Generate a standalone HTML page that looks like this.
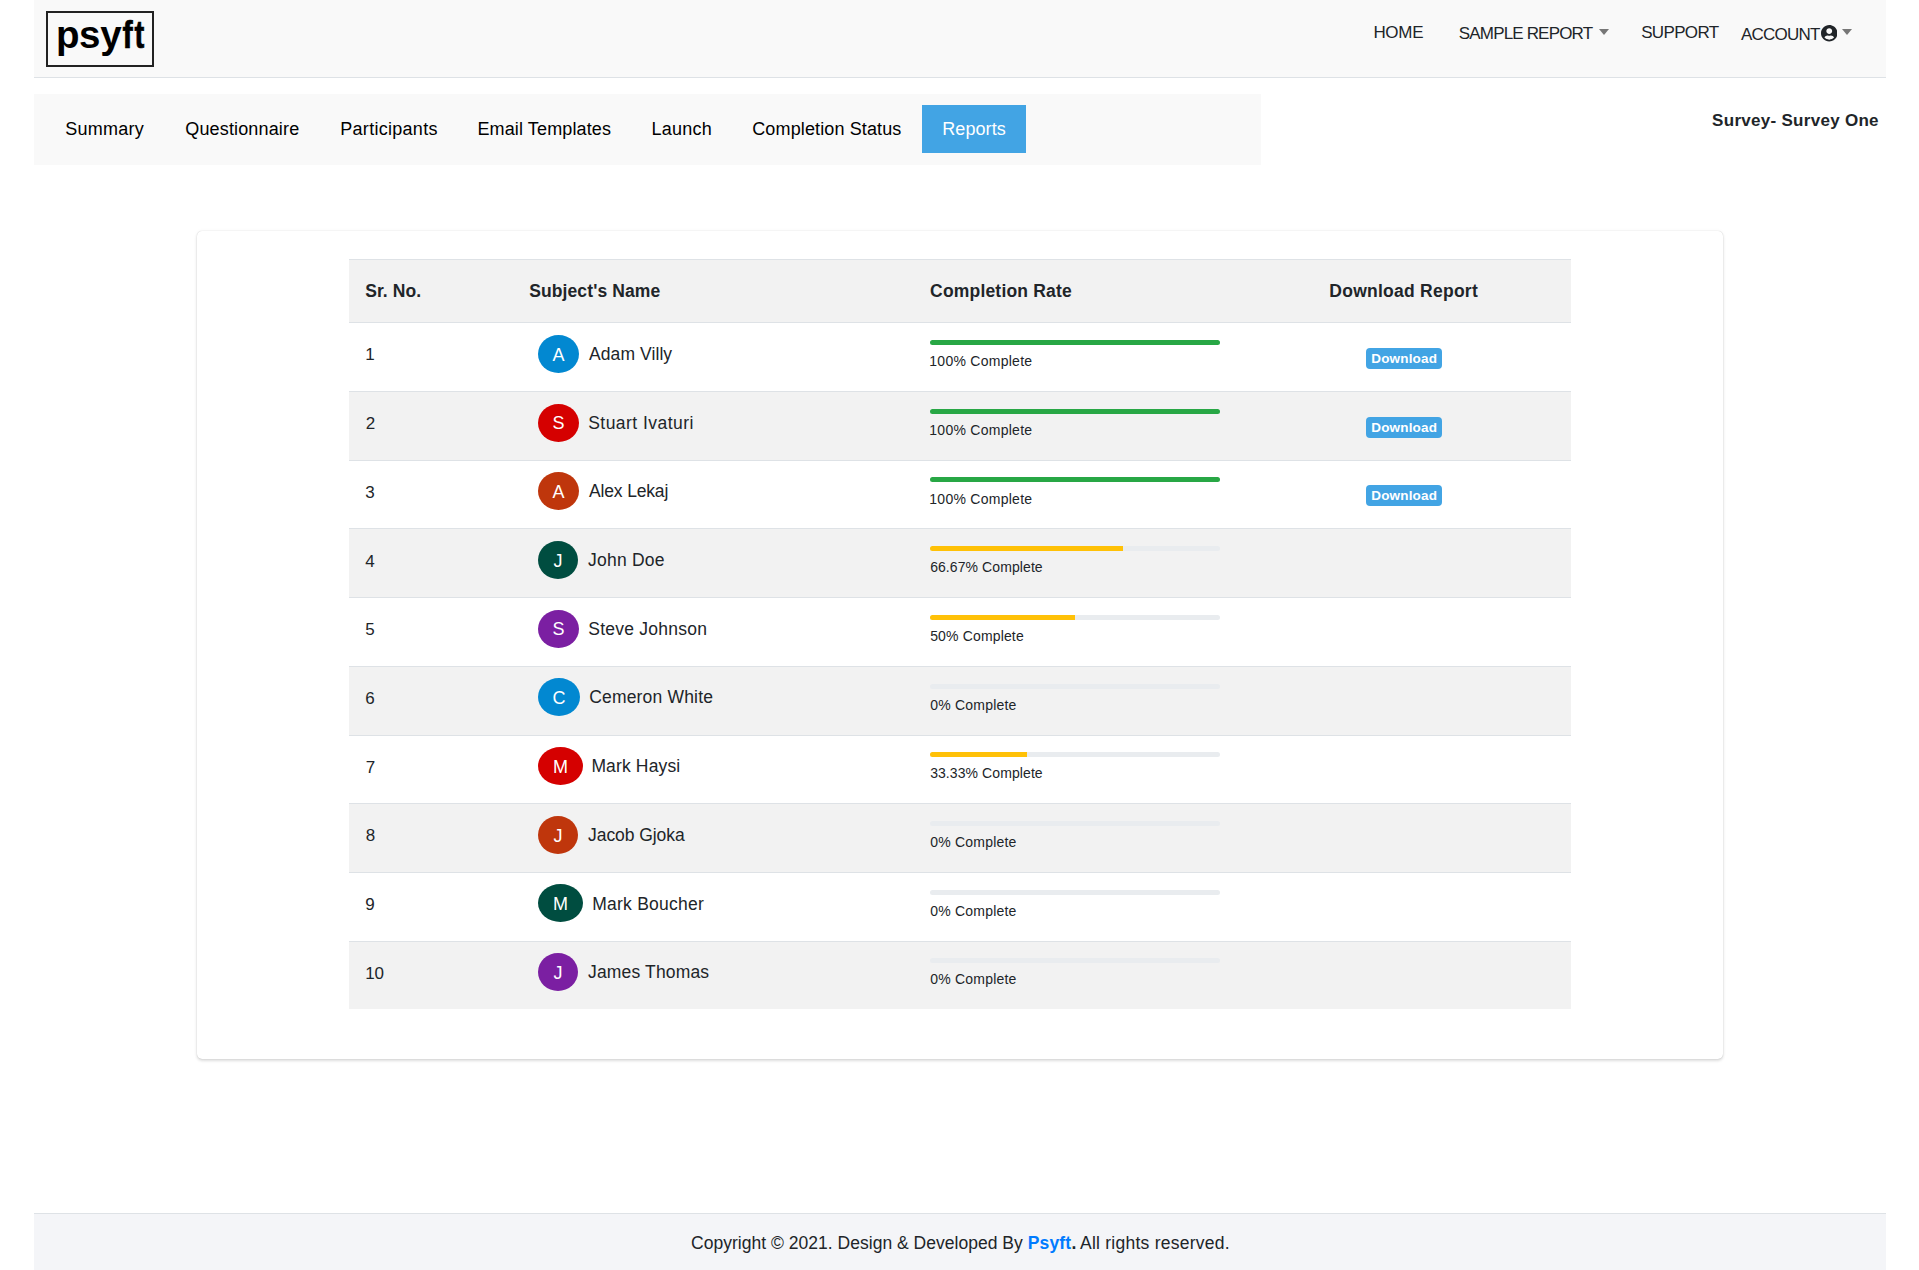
<!DOCTYPE html>
<html><head><meta charset="utf-8"><title>Psyft Reports</title>
<style>
html,body{margin:0;padding:0;background:#fff;}
body{width:1919px;height:1270px;position:relative;overflow:hidden;font-family:"Liberation Sans", sans-serif;}
.t,.bg{position:absolute;}
.t{white-space:nowrap;}
.av{border-radius:50%;color:#fff;font-size:17px;}

</style></head><body>
<div class="bg" style="left:34px;top:0;width:1852px;height:77px;background:#f9f9f9;border-bottom:1px solid #dee2e6"></div>
<div class="bg" style="left:46px;top:11px;width:104px;height:52px;border:2px solid #222;"></div>
<div id="lg0" class="t" style="left:55.90px;top:15.71px;font-size:38.5px;line-height:38.5px;color:#000;font-weight:700;letter-spacing:0.000px;">p</div>
<div id="lg1" class="t" style="left:79.10px;top:15.71px;font-size:38.5px;line-height:38.5px;color:#000;font-weight:700;letter-spacing:0.000px;">s</div>
<div id="lg2" class="t" style="left:100.33px;top:15.71px;font-size:38.5px;line-height:38.5px;color:#000;font-weight:700;letter-spacing:0.000px;">y</div>
<div id="lg3" class="t" style="left:121.45px;top:15.71px;font-size:38.5px;line-height:38.5px;color:#000;font-weight:700;letter-spacing:0.000px;transform:scaleX(0.795);transform-origin:6.80px 0;-webkit-text-stroke:0.7px #000;">f</div>
<div id="lg4" class="t" style="left:133.10px;top:15.71px;font-size:38.5px;line-height:38.5px;color:#000;font-weight:700;letter-spacing:0.000px;transform:scaleX(0.765);transform-origin:6.45px 0;-webkit-text-stroke:0.7px #000;">t</div>
<div id="home" class="t" style="left:1373.40px;top:23.61px;font-size:17px;line-height:17px;color:#212529;font-weight:400;letter-spacing:-0.300px;">HOME</div>
<div id="samp" class="t" style="left:1458.80px;top:25.41px;font-size:17px;line-height:17px;color:#212529;font-weight:400;letter-spacing:-0.831px;">SAMPLE REPORT</div>
<div class="bg" style="left:1598.5px;top:28.5px;width:0;height:0;border-left:5.5px solid transparent;border-right:5.5px solid transparent;border-top:6px solid #777"></div>
<div id="supp" class="t" style="left:1641.20px;top:23.61px;font-size:17px;line-height:17px;color:#212529;font-weight:400;letter-spacing:-0.663px;">SUPPORT</div>
<div id="acct" class="t" style="left:1741.05px;top:25.61px;font-size:17px;line-height:17px;color:#212529;font-weight:400;letter-spacing:-0.797px;">ACCOUNT</div>
<svg class="bg" style="left:1820.5px;top:25.3px" width="16.5" height="16.5" viewBox="0 0 496 496"><path fill="#212529" d="M248 8C111 8 0 119 0 256s111 248 248 248 248-111 248-248S385 8 248 8zm0 96c48.600 0 88 39.400 88 88s-39.400 88-88 88-88-39.400-88-88 39.400-88 88-88zm0 344c-58.700 0-111.300-26.600-146.500-68.200 18.800-35.400 55.600-59.800 98.500-59.800 2.400 0 4.800.4 7.100 1.100 13 4.200 26.600 6.900 40.900 6.900 14.300 0 28-2.700 40.900-6.900 2.300-.7 4.700-1.100 7.100-1.100 42.900 0 79.700 24.400 98.500 59.800C359.300 421.400 306.700 448 248 448z" transform="translate(0,-8)"/></svg>
<div class="bg" style="left:1841.5px;top:29px;width:0;height:0;border-left:5.5px solid transparent;border-right:5.5px solid transparent;border-top:6px solid #777"></div>
<div class="bg" style="left:34px;top:94px;width:1227px;height:71px;background:#f9f9f9"></div>
<div class="bg" style="left:922px;top:105px;width:104px;height:48px;background:#42a4e4"></div>
<div id="t1" class="t" style="left:65.34px;top:120.06px;font-size:18px;line-height:18px;color:#000;font-weight:400;letter-spacing:0.228px;">Summary</div>
<div id="t2" class="t" style="left:185.26px;top:120.06px;font-size:18px;line-height:18px;color:#000;font-weight:400;letter-spacing:0.155px;">Questionnaire</div>
<div id="t3" class="t" style="left:340.30px;top:120.06px;font-size:18px;line-height:18px;color:#000;font-weight:400;letter-spacing:0.280px;">Participants</div>
<div id="t4" class="t" style="left:477.40px;top:120.06px;font-size:18px;line-height:18px;color:#000;font-weight:400;letter-spacing:0.133px;">Email Templates</div>
<div id="t5" class="t" style="left:651.38px;top:120.06px;font-size:18px;line-height:18px;color:#000;font-weight:400;letter-spacing:0.272px;">Launch</div>
<div id="t6" class="t" style="left:752.26px;top:120.06px;font-size:18px;line-height:18px;color:#000;font-weight:400;letter-spacing:0.125px;">Completion Status</div>
<div id="t7" class="t" style="left:942.30px;top:120.06px;font-size:18px;line-height:18px;color:#fff;font-weight:400;letter-spacing:0.067px;">Reports</div>
<div id="survey" class="t" style="left:1712.10px;top:112.21px;font-size:17px;line-height:17px;color:#212529;font-weight:700;letter-spacing:0.288px;">Survey- Survey One</div>
<div class="bg" style="left:197px;top:231px;width:1526px;height:828px;background:#fff;border-radius:5px;box-shadow:0 0 1px rgba(0,0,0,.22),0 2px 3px rgba(0,0,0,.12),0 0 4px rgba(0,0,0,.04)"></div>
<div class="bg" style="left:349px;top:259px;width:1222px;height:62px;background:#f2f2f2;border-top:1px solid #dee2e6;border-bottom:1px solid #dee2e6"></div>
<div id="h1" class="t" style="left:365.20px;top:283.19px;font-size:17.5px;line-height:17.5px;color:#212529;font-weight:700;letter-spacing:0.067px;">Sr. No.</div>
<div id="h2" class="t" style="left:529.14px;top:283.19px;font-size:17.5px;line-height:17.5px;color:#212529;font-weight:700;letter-spacing:0.114px;">Subject's Name</div>
<div id="h3" class="t" style="left:930.12px;top:283.19px;font-size:17.5px;line-height:17.5px;color:#212529;font-weight:700;letter-spacing:0.181px;">Completion Rate</div>
<div id="h4" class="t" style="left:1329.30px;top:283.19px;font-size:17.5px;line-height:17.5px;color:#212529;font-weight:700;letter-spacing:0.257px;">Download Report</div>
<div id="n0" class="t" style="left:365.30px;top:346.41px;font-size:17px;line-height:17px;color:#212529;font-weight:400;letter-spacing:0.000px;">1</div>
<div class="av bg" style="left:538px;top:334.80px;width:41px;height:38px;background:#0288d1"><span style="position:absolute;left:0;right:0;top:0.9px;line-height:38px;font-size:18px;text-align:center">A</span></div>
<div id="nm0" class="t" style="left:589.04px;top:345.99px;font-size:17.5px;line-height:17.5px;color:#212529;font-weight:400;letter-spacing:0.081px;">Adam Villy</div>
<div class="bg" style="left:930px;top:340.00px;width:290px;height:5px;background:#e9ecef;border-radius:3px;overflow:hidden"><div style="width:100%;height:5px;background:#28a745"></div></div>
<div id="p0" class="t" style="left:929.34px;top:354.15px;font-size:14px;line-height:14px;color:#212529;font-weight:400;letter-spacing:0.260px;">100% Complete</div>
<div class="bg" style="left:1366px;top:348.00px;width:76px;height:21px;background:#42a4e4;border-radius:4px"></div>
<div id="d0" class="t" style="left:1371.24px;top:351.87px;font-size:13.5px;line-height:13.5px;color:#fff;font-weight:700;letter-spacing:0.166px;">Download</div>
<div class="bg" style="left:349px;top:391px;width:1222px;height:68px;background:#f2f2f2;border-top:1px solid #dee2e6"></div>
<div id="n1" class="t" style="left:365.70px;top:415.11px;font-size:17px;line-height:17px;color:#212529;font-weight:400;letter-spacing:0.000px;">2</div>
<div class="av bg" style="left:538px;top:403.50px;width:41px;height:38px;background:#d50000"><span style="position:absolute;left:0;right:0;top:0.9px;line-height:38px;font-size:18px;text-align:center">S</span></div>
<div id="nm1" class="t" style="left:588.24px;top:414.69px;font-size:17.5px;line-height:17.5px;color:#212529;font-weight:400;letter-spacing:0.456px;">Stuart Ivaturi</div>
<div class="bg" style="left:930px;top:408.70px;width:290px;height:5px;background:#e9ecef;border-radius:3px;overflow:hidden"><div style="width:100%;height:5px;background:#28a745"></div></div>
<div id="p1" class="t" style="left:929.34px;top:422.85px;font-size:14px;line-height:14px;color:#212529;font-weight:400;letter-spacing:0.260px;">100% Complete</div>
<div class="bg" style="left:1366px;top:416.70px;width:76px;height:21px;background:#42a4e4;border-radius:4px"></div>
<div id="d1" class="t" style="left:1371.24px;top:420.57px;font-size:13.5px;line-height:13.5px;color:#fff;font-weight:700;letter-spacing:0.166px;">Download</div>
<div class="bg" style="left:349px;top:460px;width:1222px;height:67px;background:#fff;border-top:1px solid #dee2e6"></div>
<div id="n2" class="t" style="left:365.30px;top:483.81px;font-size:17px;line-height:17px;color:#212529;font-weight:400;letter-spacing:0.000px;">3</div>
<div class="av bg" style="left:538px;top:472.20px;width:41px;height:38px;background:#bf360c"><span style="position:absolute;left:0;right:0;top:0.9px;line-height:38px;font-size:18px;text-align:center">A</span></div>
<div id="nm2" class="t" style="left:589.00px;top:483.39px;font-size:17.5px;line-height:17.5px;color:#212529;font-weight:400;letter-spacing:-0.156px;">Alex Lekaj</div>
<div class="bg" style="left:930px;top:477.40px;width:290px;height:5px;background:#e9ecef;border-radius:3px;overflow:hidden"><div style="width:100%;height:5px;background:#28a745"></div></div>
<div id="p2" class="t" style="left:929.34px;top:491.55px;font-size:14px;line-height:14px;color:#212529;font-weight:400;letter-spacing:0.260px;">100% Complete</div>
<div class="bg" style="left:1366px;top:485.40px;width:76px;height:21px;background:#42a4e4;border-radius:4px"></div>
<div id="d2" class="t" style="left:1371.24px;top:489.27px;font-size:13.5px;line-height:13.5px;color:#fff;font-weight:700;letter-spacing:0.166px;">Download</div>
<div class="bg" style="left:349px;top:528px;width:1222px;height:68px;background:#f2f2f2;border-top:1px solid #dee2e6"></div>
<div id="n3" class="t" style="left:365.30px;top:552.51px;font-size:17px;line-height:17px;color:#212529;font-weight:400;letter-spacing:0.000px;">4</div>
<div class="av bg" style="left:538px;top:540.90px;width:40px;height:38px;background:#004d40"><span style="position:absolute;left:0;right:0;top:0.9px;line-height:38px;font-size:18px;text-align:center">J</span></div>
<div id="nm3" class="t" style="left:588.04px;top:552.09px;font-size:17.5px;line-height:17.5px;color:#212529;font-weight:400;letter-spacing:0.220px;">John Doe</div>
<div class="bg" style="left:930px;top:546.10px;width:290px;height:5px;background:#e9ecef;border-radius:3px;overflow:hidden"><div style="width:66.67%;height:5px;background:#ffc107"></div></div>
<div id="p3" class="t" style="left:930.14px;top:560.25px;font-size:14px;line-height:14px;color:#212529;font-weight:400;letter-spacing:0.088px;">66.67% Complete</div>
<div class="bg" style="left:349px;top:597px;width:1222px;height:68px;background:#fff;border-top:1px solid #dee2e6"></div>
<div id="n4" class="t" style="left:365.30px;top:621.21px;font-size:17px;line-height:17px;color:#212529;font-weight:400;letter-spacing:0.000px;">5</div>
<div class="av bg" style="left:538px;top:609.60px;width:41px;height:38px;background:#7b1fa2"><span style="position:absolute;left:0;right:0;top:0.9px;line-height:38px;font-size:18px;text-align:center">S</span></div>
<div id="nm4" class="t" style="left:588.22px;top:620.79px;font-size:17.5px;line-height:17.5px;color:#212529;font-weight:400;letter-spacing:0.243px;">Steve Johnson</div>
<div class="bg" style="left:930px;top:614.80px;width:290px;height:5px;background:#e9ecef;border-radius:3px;overflow:hidden"><div style="width:50%;height:5px;background:#ffc107"></div></div>
<div id="p4" class="t" style="left:930.14px;top:628.95px;font-size:14px;line-height:14px;color:#212529;font-weight:400;letter-spacing:0.159px;">50% Complete</div>
<div class="bg" style="left:349px;top:666px;width:1222px;height:68px;background:#f2f2f2;border-top:1px solid #dee2e6"></div>
<div id="n5" class="t" style="left:365.30px;top:689.91px;font-size:17px;line-height:17px;color:#212529;font-weight:400;letter-spacing:0.000px;">6</div>
<div class="av bg" style="left:538px;top:678.30px;width:42px;height:38px;background:#0288d1"><span style="position:absolute;left:0;right:0;top:0.9px;line-height:38px;font-size:18px;text-align:center">C</span></div>
<div id="nm5" class="t" style="left:589.18px;top:689.49px;font-size:17.5px;line-height:17.5px;color:#212529;font-weight:400;letter-spacing:0.183px;">Cemeron White</div>
<div class="bg" style="left:930px;top:683.50px;width:290px;height:5px;background:#e9ecef;border-radius:3px;overflow:hidden"><div style="width:0%;height:5px;background:#ffc107"></div></div>
<div id="p5" class="t" style="left:930.14px;top:697.65px;font-size:14px;line-height:14px;color:#212529;font-weight:400;letter-spacing:0.220px;">0% Complete</div>
<div class="bg" style="left:349px;top:735px;width:1222px;height:67px;background:#fff;border-top:1px solid #dee2e6"></div>
<div id="n6" class="t" style="left:365.70px;top:758.61px;font-size:17px;line-height:17px;color:#212529;font-weight:400;letter-spacing:0.000px;">7</div>
<div class="av bg" style="left:538px;top:747.00px;width:45px;height:38px;background:#d50000"><span style="position:absolute;left:0;right:0;top:0.9px;line-height:38px;font-size:18px;text-align:center">M</span></div>
<div id="nm6" class="t" style="left:591.40px;top:758.19px;font-size:17.5px;line-height:17.5px;color:#212529;font-weight:400;letter-spacing:0.142px;">Mark Haysi</div>
<div class="bg" style="left:930px;top:752.20px;width:290px;height:5px;background:#e9ecef;border-radius:3px;overflow:hidden"><div style="width:33.33%;height:5px;background:#ffc107"></div></div>
<div id="p6" class="t" style="left:930.14px;top:766.35px;font-size:14px;line-height:14px;color:#212529;font-weight:400;letter-spacing:0.088px;">33.33% Complete</div>
<div class="bg" style="left:349px;top:803px;width:1222px;height:68px;background:#f2f2f2;border-top:1px solid #dee2e6"></div>
<div id="n7" class="t" style="left:365.70px;top:827.31px;font-size:17px;line-height:17px;color:#212529;font-weight:400;letter-spacing:0.000px;">8</div>
<div class="av bg" style="left:538px;top:815.70px;width:40px;height:38px;background:#bf360c"><span style="position:absolute;left:0;right:0;top:0.9px;line-height:38px;font-size:18px;text-align:center">J</span></div>
<div id="nm7" class="t" style="left:588.10px;top:826.89px;font-size:17.5px;line-height:17.5px;color:#212529;font-weight:400;letter-spacing:-0.072px;">Jacob Gjoka</div>
<div class="bg" style="left:930px;top:820.90px;width:290px;height:5px;background:#e9ecef;border-radius:3px;overflow:hidden"><div style="width:0%;height:5px;background:#ffc107"></div></div>
<div id="p7" class="t" style="left:930.14px;top:835.05px;font-size:14px;line-height:14px;color:#212529;font-weight:400;letter-spacing:0.220px;">0% Complete</div>
<div class="bg" style="left:349px;top:872px;width:1222px;height:68px;background:#fff;border-top:1px solid #dee2e6"></div>
<div id="n8" class="t" style="left:365.30px;top:896.01px;font-size:17px;line-height:17px;color:#212529;font-weight:400;letter-spacing:0.000px;">9</div>
<div class="av bg" style="left:538px;top:884.40px;width:45px;height:38px;background:#004d40"><span style="position:absolute;left:0;right:0;top:0.9px;line-height:38px;font-size:18px;text-align:center">M</span></div>
<div id="nm8" class="t" style="left:592.24px;top:895.59px;font-size:17.5px;line-height:17.5px;color:#212529;font-weight:400;letter-spacing:0.237px;">Mark Boucher</div>
<div class="bg" style="left:930px;top:889.60px;width:290px;height:5px;background:#e9ecef;border-radius:3px;overflow:hidden"><div style="width:0%;height:5px;background:#ffc107"></div></div>
<div id="p8" class="t" style="left:930.14px;top:903.75px;font-size:14px;line-height:14px;color:#212529;font-weight:400;letter-spacing:0.220px;">0% Complete</div>
<div class="bg" style="left:349px;top:941px;width:1222px;height:67px;background:#f2f2f2;border-top:1px solid #dee2e6"></div>
<div id="n9" class="t" style="left:365.30px;top:964.71px;font-size:17px;line-height:17px;color:#212529;font-weight:400;letter-spacing:-0.240px;">10</div>
<div class="av bg" style="left:538px;top:953.10px;width:40px;height:38px;background:#7b1fa2"><span style="position:absolute;left:0;right:0;top:0.9px;line-height:38px;font-size:18px;text-align:center">J</span></div>
<div id="nm9" class="t" style="left:588.06px;top:964.29px;font-size:17.5px;line-height:17.5px;color:#212529;font-weight:400;letter-spacing:0.157px;">James Thomas</div>
<div class="bg" style="left:930px;top:958.30px;width:290px;height:5px;background:#e9ecef;border-radius:3px;overflow:hidden"><div style="width:0%;height:5px;background:#ffc107"></div></div>
<div id="p9" class="t" style="left:930.14px;top:972.45px;font-size:14px;line-height:14px;color:#212529;font-weight:400;letter-spacing:0.220px;">0% Complete</div>
<div class="bg" style="left:34px;top:1213px;width:1852px;height:56px;background:#f4f5f8;border-top:1px solid #dee2e6"></div>
<div id="f1" class="t" style="left:691.10px;top:1234.79px;font-size:17.5px;line-height:17.5px;color:#212529;font-weight:400;letter-spacing:0.017px;">Copyright © 2021. Design &amp; Developed By</div>
<div id="f2" class="t" style="left:1027.70px;top:1234.79px;font-size:17.5px;line-height:17.5px;color:#212529;font-weight:400;letter-spacing:0.180px;"><b style="color:#007bff">Psyft</b><b>.</b></div>
<div id="f3" class="t" style="left:1080.00px;top:1234.79px;font-size:17.5px;line-height:17.5px;color:#212529;font-weight:400;letter-spacing:0.247px;">All rights reserved.</div>
</body></html>
